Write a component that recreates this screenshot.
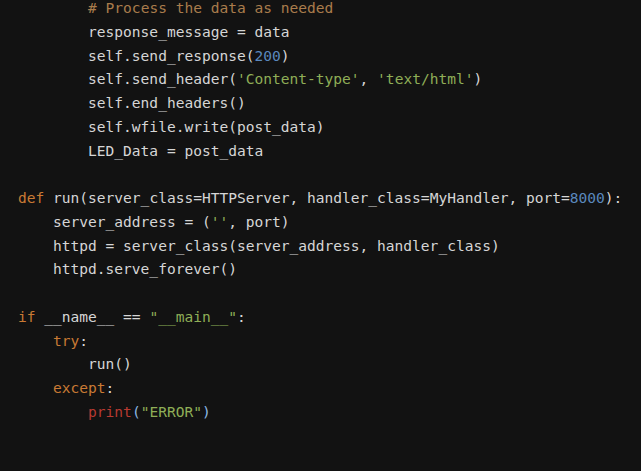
import React from "react";

const C = {
  txt: "text-[#d6d6d6]",
  cmt: "text-[#a97c4c]",
  kw: "text-[#c97a34]",
  num: "text-[#5a88bd]",
  str: "text-[#8fae57]",
  fn: "text-[#b83a31]",
  par: "text-[#8cb8e4]",
};

type Seg = [string, string?];

const lines: Seg[][] = [
  [["        "], ["# Process the data as needed", C.cmt]],
  [["        response_message = data"]],
  [["        self.send_response("], ["200", C.num], [")"]],
  [["        self.send_header("], ["'Content-type'", C.str], [", "], ["'text/html'", C.str], [")"]],
  [["        self.end_headers()"]],
  [["        self.wfile.write(post_data)"]],
  [["        LED_Data = post_data"]],
  [[""]],
  [["def", C.kw], [" run(server_class=HTTPServer, handler_class=MyHandler, port="], ["8000", C.num], ["):"]],
  [["    server_address = ("], ["''", C.str], [", port)"]],
  [["    httpd = server_class(server_address, handler_class)"]],
  [["    httpd.serve_forever()"]],
  [[""]],
  [["if", C.kw], [" __name__ == "], ['"__main__"', C.str], [":"]],
  [["    "], ["try", C.kw], [":"]],
  [["        run()"]],
  [["    "], ["except", C.kw], [":"]],
  [["        "], ["print", C.fn], ["(", C.par], ['"ERROR"', C.str], [")", C.par]],
  [[""]],
  [[""]],
];

export default function App() {
  return (
    <div className="w-[641px] h-[471px] overflow-hidden bg-[#121212]">
      <pre
        className="-mt-[4px] pl-[18px] text-[14.55px] leading-[23.77px] text-[#d6d6d6] whitespace-pre"
        style={{ fontFamily: '"DejaVu Sans Mono", monospace' }}
      >
        {lines.map((segs, i) => (
          <div key={i} className="h-[23.77px]">
            {segs.map(([t, cls], j) => (
              <span key={j} className={cls ?? C.txt}>
                {t}
              </span>
            ))}
          </div>
        ))}
      </pre>
    </div>
  );
}
